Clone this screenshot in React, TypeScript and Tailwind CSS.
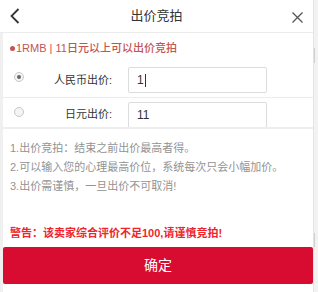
const font = "font-['Liberation_Sans','Noto_Sans_CJK_SC',sans-serif]"

const Radio = ({ checked }: { checked?: boolean }) => (
	<span className="flex h-[10px] w-[10px] -translate-y-[3px] items-center justify-center rounded-full border border-[#c8c8c8] bg-[#f4f4f4]">
		{checked && <span className="h-[4px] w-[4px] rounded-full bg-[#666]" />}
	</span>
)

const BidRow = ({
	label,
	value,
	checked,
	caret,
	className
}: {
	label: string
	value: string
	checked?: boolean
	caret?: boolean
	className: string
}) => (
	<div className={`flex items-center ${className}`}>
		<div className="ml-[11px] w-[10px]">
			<Radio checked={checked} />
		</div>
		<div className="w-[88px] text-right text-[11px] text-[#333]">{label}</div>
		<div className="ml-[16px] flex h-[26px] w-[139px] items-center rounded-[2px] border border-[#dcdcdc] bg-white pl-[8px] text-[12px] text-[#333]">
			{value}
			{caret && <span className="ml-[1px] h-[13px] w-px bg-[#333]" />}
		</div>
	</div>
)

const App = () => {
	return (
		<div className={`flex h-[292px] w-[318px] bg-white ${font}`}>
			<div className="flex w-[313px] flex-col">
				<header className="relative flex h-[33px] shrink-0 items-center justify-center border-b border-[#ececec]">
					<svg className="absolute left-[9px] top-[8px]" width="12" height="16" viewBox="0 0 12 16">
						<path d="M9.5 1 L2.5 8 L9.5 15" fill="none" stroke="#333" strokeWidth="1.8" />
					</svg>
					<span className="text-[13px] text-[#333]">出价竞拍</span>
					<svg className="absolute left-[292px] top-[12px]" width="11" height="11" viewBox="0 0 11 11">
						<path d="M0.5 0.5 L10.5 10.5 M10.5 0.5 L0.5 10.5" stroke="#555" strokeWidth="1.3" />
					</svg>
				</header>

				<div className="flex flex-1 flex-col border-l-[3px] border-[#f0f0f0]">
					<div className="flex h-[30px] items-center pl-[7px] text-[11px] font-medium text-[#c55454]">
						<span className="mr-[1px] h-[5px] w-[5px] rounded-full bg-[#c55454]" />
						1RMB | 11日元以上可以出价竞拍
					</div>

					<BidRow
						label="人民币出价:"
						value="1"
						checked
						caret
						className="h-[35px] border-b border-[#ececec]"
					/>
					<BidRow label="日元出价:" value="11" className="h-[29px] pt-[4px]" />
					<div className="h-[2px] bg-[#eeeeee]" />

					<div className="pl-[7px] pt-[10px] text-[11px] leading-[19px] text-[#939393]">
						<p>1.出价竞拍：结束之前出价最高者得。</p>
						<p>2.可以输入您的心理最高价位，系统每次只会小幅加价。</p>
						<p>3.出价需谨慎，一旦出价不可取消!</p>
					</div>

					<p className="mt-[29px] pl-[7px] text-[11px] font-bold leading-[16px] text-[#f0242c]">
						警告：该卖家综合评价不足100,请谨慎竞拍!
					</p>

					<button className="mt-[6px] flex h-[37px] items-center justify-center rounded-[2px] bg-[#d80b30] text-[14px] text-white">
						确定
					</button>
				</div>
			</div>
			<div className="flex w-[5px] flex-col border-l border-[#e4e4e4] bg-[#f2f2f2]">
				<div className="mt-[48px] h-[15px] w-px bg-[#cfcfcf]" />
				<div className="mt-[170px] h-[14px] w-px bg-[#cfcfcf]" />
			</div>
		</div>
	)
}

export default App
